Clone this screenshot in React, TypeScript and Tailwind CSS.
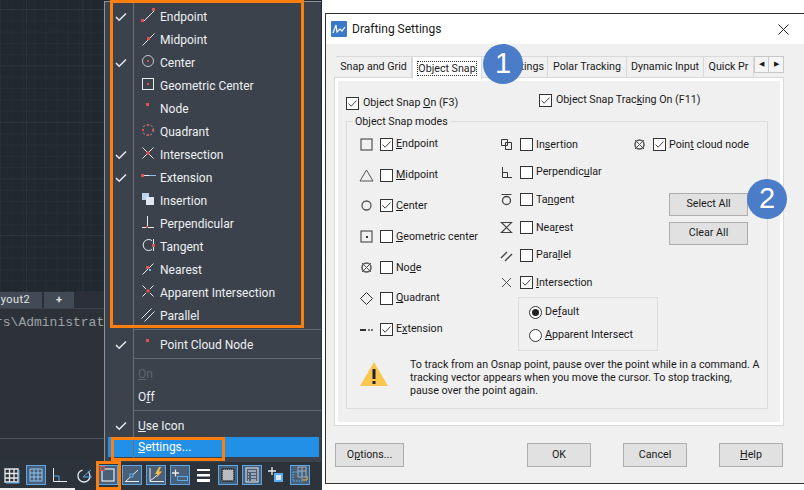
import React from "react";

const RED = "#e0524f";
const W = "#e8eaec";

type MenuItem = { label: string; checked?: boolean; icon: React.ReactNode };

const Line = ({ d, c = W, w = 1 }: { d: string; c?: string; w?: number }) => (
  <path d={d} fill="none" stroke={c} strokeWidth={w} />
);
const Dot = ({ x, y, s = 3, c = RED }: { x: number; y: number; s?: number; c?: string }) => (
  <rect x={x} y={y} width={s} height={s} fill={c} />
);

const menuItems: MenuItem[] = [
  { label: "Endpoint", checked: true, icon: <><Line d="M2.5 13.5 13.5 2.5" /><Dot x={0} y={11} /><Dot x={11} y={0} /></> },
  { label: "Midpoint", icon: <><Line d="M1.5 14.5 13.5 2.5" /><Dot x={6} y={6} /></> },
  { label: "Center", checked: true, icon: <><circle cx="7" cy="7" r="5.5" fill="none" stroke="#c4c7cb" /><Dot x={6} y={6} s={2} /></> },
  { label: "Geometric Center", icon: <><rect x="1.5" y="1.5" width="11" height="11" fill="none" stroke={W} /><Dot x={6} y={6} s={2} /></> },
  { label: "Node", icon: <Dot x={5} y={3} /> },
  { label: "Quadrant", icon: <><circle cx="7" cy="7" r="5.5" fill="none" stroke="#a9adb2" strokeDasharray="2 2" /><Dot x={6} y={1} s={2} /><Dot x={1} y={6} s={2} /><Dot x={11} y={6} s={2} /><Dot x={6} y={11} s={2} /></> },
  { label: "Intersection", checked: true, icon: <><Line d="M1.5 1.5 12.5 12.5M12.5 1.5 1.5 12.5" /><Dot x={5.5} y={5.5} s={3} /></> },
  { label: "Extension", checked: true, icon: <><Dot x={0} y={5} /><Line d="M3 6.5H8" /><Line d="M8 6.5H15" c="#8fc3ea" /></> },
  { label: "Insertion", icon: <><rect x="1" y="1" width="7" height="7" fill="#bcd3ea" /><rect x="5" y="5" width="8" height="8" fill="#dfe8f2" /></> },
  { label: "Perpendicular", icon: <><Line d="M6.5 1V12M1 12.5H13" /><Dot x={5} y={11} s={2} /></> },
  { label: "Tangent", icon: <><path d="M11 2.6A5.5 5.5 0 1 0 11 11.4" fill="none" stroke={W} /><Line d="M12.5 1V13" /><Dot x={11} y={6} /></> },
  { label: "Nearest", icon: <><Line d="M1.5 13.5 12.5 2.5" /><Dot x={5} y={5} /><Dot x={8} y={8} s={2} c="#6fb5ea" /></> },
  { label: "Apparent Intersection", icon: <><Line d="M1.5 1.5 5 5M9 9 12.5 12.5M12.5 1.5 9 5M5 9 1.5 12.5" /><Dot x={5.5} y={5.5} s={3} /></> },
  { label: "Parallel", icon: <><Line d="M0.5 11.5 10.5 1.5M3.5 14.5 13.5 4.5" /></> },
];

const Check = () => (
  <svg width="12" height="10" viewBox="0 0 12 10">
    <path d="M1 5 4.2 8.2 11 1.5" fill="none" stroke="#e8eaec" strokeWidth="1.5" />
  </svg>
);

const MenuRow = ({ item }: { item: MenuItem }) => (
  <div className="flex h-[23px] items-center">
    <div className="flex w-[29px] justify-center pl-[2px]">{item.checked && <Check />}</div>
    <div className="flex w-[26px] pl-[7px]">
      <svg width="16" height="15" viewBox="0 0 16 15" className="-mt-[3px]">{item.icon}</svg>
    </div>
    <span className="text-[#eef0f2]">{item.label}</span>
  </div>
);

const StatusBtn = ({ active, children }: { active?: boolean; children: React.ReactNode }) => (
  <div className={`flex h-[20px] w-[20px] items-center justify-center border ${active ? "border-[#5da6e6] bg-[#4a6078]" : "border-transparent"}`}>
    <svg width="18" height="18" viewBox="0 0 18 18">{children}</svg>
  </div>
);

const BLUE = "#5aaef0";

const StatusBar = () => (
  <div className="flex h-[29px] items-start gap-[4px] bg-[#2d333b] pl-[2px] pt-[4px]">
    <StatusBtn>
      <Line d="M2 3H15V16H2ZM6.5 3V16M11 3V16M2 7.5H15M2 12H15" w={1.3} />
      <Line d="M16 4V17H3" c={BLUE} />
    </StatusBtn>
    <StatusBtn active><Line d="M3 3H15V15H3ZM7 3V15M11 3V15M3 7H15M3 11H15" c="#8ec6f2" /></StatusBtn>
    <StatusBtn>
      <Line d="M2.500 2V15.500H16" />
      <Line d="M2.500 10H8V15" c={BLUE} />
    </StatusBtn>
    <StatusBtn>
      <circle cx="9" cy="10" r="6" fill="none" stroke={W} strokeWidth="1.3" strokeDasharray="26 6" />
      <Line d="M8 11 16 4M8 11H17" c={BLUE} />
    </StatusBtn>
    <StatusBtn active>
      <rect x="3" y="3" width="12" height="12" fill="none" stroke={W} strokeWidth="1.2" />
      <rect x="1.500" y="0.500" width="4" height="4" fill="#5a6a7c" stroke={RED} />
    </StatusBtn>
    <StatusBtn active><Line d="M2 16 15 4M2 15.500H16" /><rect x="7" y="8" width="3" height="3" fill="#4a6078" stroke={BLUE} /></StatusBtn>
    <StatusBtn active>
      <Line d="M3 2V15.500H17M3 15 14 6" />
      <path d="M12 1 8 8H11L9.500 12 15 5.500H12L14 1Z" fill="#f5b93d" />
    </StatusBtn>
    <StatusBtn active>
      <Line d="M1 7H8M4.500 3.500V10.500" w={1.3} />
      <rect x="6.500" y="10.500" width="10" height="4" fill="none" stroke={BLUE} />
    </StatusBtn>
    <StatusBtn>
      <rect x="2" y="3" width="13" height="2" fill="#fff" />
      <rect x="2" y="8" width="13" height="2.500" fill="#fff" />
      <rect x="2" y="13" width="13" height="3" fill="#fff" />
    </StatusBtn>
    <StatusBtn active>
      <rect x="3" y="3" width="12" height="12" rx="1" fill="#b9bcc0" stroke="#1e2329" strokeWidth="1.5" strokeDasharray="1.500 0.500" />
    </StatusBtn>
    <StatusBtn active>
      <rect x="3" y="2" width="12" height="14" fill="none" stroke={W} />
      <Line d="M5 5H13M5 8H6M8 8H13M5 11H6M8 11H13M5 14H6M8 14H13" />
    </StatusBtn>
    <StatusBtn>
      <Line d="M1 5H9M5 1V9" w={1.3} />
      <rect x="8" y="8" width="7" height="7" fill="#dfe8f2" stroke={BLUE} strokeWidth="2" />
    </StatusBtn>
    <StatusBtn active>
      <Line d="M7 1H15V11H7ZM11 1V11M7 5H15" c="#a5adb6" />
      <rect x="2" y="6" width="9" height="9" fill="none" stroke={BLUE} strokeDasharray="1.500 1" />
      <Line d="M16 10V14H11" c="#f5b93d" />
    </StatusBtn>
  </div>
);

const CadPanel = () => (
  <div className="flex h-full w-[325px] shrink-0 flex-col bg-white font-['Roboto',sans-serif]">
    <div className="h-[292px] w-[322px] bg-[#212830]">
      <svg width="322" height="292">
        <defs>
          <pattern id="minor" width="11.3" height="11.3" patternUnits="userSpaceOnUse" y="9">
            <path d="M11.3 0H0V11.3" fill="none" stroke="#29313a" />
          </pattern>
          <pattern id="major" width="56.5" height="56.5" patternUnits="userSpaceOnUse" x="26" y="9">
            <path d="M56.500 0H0V56.500" fill="none" stroke="#323b46" />
          </pattern>
        </defs>
        <rect width="322" height="292" fill="url(#minor)" />
        <rect width="322" height="292" fill="url(#major)" />
      </svg>
    </div>
    <div className="flex h-[16px] w-[322px] gap-[2px] bg-[#2b3038] text-[11px] leading-[15px] text-[#e0e2e4]">
      <div className="w-[42px] bg-[#424a55] pr-[12px] text-right tracking-[0.4px]">yout2</div>
      <div className="w-[30px] bg-[#424a55] text-center font-bold">+</div>
    </div>
    <div className="h-[130px] w-[322px] overflow-hidden border-t border-[#3a414a] bg-[#2d3239] pt-[5px] font-['Liberation_Mono',monospace] text-[13px] leading-[18px] text-[#9ea3a8]">
      <div className="-ml-[5px] whitespace-nowrap">rs\Administrat</div>
    </div>
    <div className="h-[23px] w-[322px] border-t border-[#4a525c] bg-[#2d3239]" />
    <div className="relative w-[322px]">
      <StatusBar />
      <div className="absolute bottom-0 left-0 h-[2px] w-[75px] bg-[#f0f0f0]" />
    </div>
  </div>
);

const SnapMenu = () => (
  <div className="absolute left-[104px] top-[1px] h-[461px] w-[217px] border-l border-t border-[#8f949a] bg-[#3b424c] font-['Roboto',sans-serif] text-[12px]">
    <div className="absolute bottom-[4px] left-[28px] top-0 w-px bg-[#6a7079]" />
    <div className="pt-[3px]">
      {menuItems.map((item) => (
        <MenuRow key={item.label} item={item} />
      ))}
    </div>
    <div className="ml-[29px] mt-[2px] h-px bg-[#5f666f]" />
    <div className="mt-[3px]">
      <MenuRow item={{ label: "Point Cloud Node", checked: true, icon: <Dot x={5} y={3} c="#d9534f" /> }} />
    </div>
    <div className="ml-[29px] mt-[2px] h-px bg-[#5f666f]" />
    <div className="mt-[3px] flex h-[23px] items-center pl-[33px] text-[#5d646d]"><span><u>O</u>n</span></div>
    <div className="flex h-[23px] items-center pl-[33px] text-[#eef0f2]"><span>O<u>f</u>f</span></div>
    <div className="ml-[29px] mt-[2px] h-px bg-[#5f666f]" />
    <div className="mt-[3px] flex h-[23px] items-center text-[#eef0f2]">
      <div className="flex w-[29px] justify-center pl-[2px]"><Check /></div>
      <span className="pl-[4px]"><u>U</u>se Icon</span>
    </div>
    <div className="ml-[3px] mr-[2px] flex h-[20px] items-center bg-[#2390e8] pl-[30px] text-white">
      <span><u>S</u>ettings...</span>
    </div>
  </div>
);

const Box = ({ on }: { on?: boolean }) => (
  <div className="flex h-[13px] w-[13px] shrink-0 items-center justify-center border border-[#333] bg-white">
    {on && (
      <svg width="11" height="11" viewBox="0 0 11 11">
        <path d="M1.500 5.500 4.200 8.200 9.500 2.500" fill="none" stroke="#444" />
      </svg>
    )}
  </div>
);

const G = "#333";
const modeIcons: Record<string, React.ReactNode> = {
  end: <rect x="2" y="2" width="11" height="11" fill="none" stroke={G} />,
  mid: <path d="M7.500 2 14 13H1Z" fill="none" stroke="#555" />,
  center: <circle cx="7.500" cy="7.500" r="4.500" fill="none" stroke="#555" strokeWidth="1.300" />,
  geo: <><rect x="2" y="2" width="11" height="11" fill="none" stroke={G} /><rect x="7" y="7" width="2" height="2" fill={G} /></>,
  node: <><circle cx="7.500" cy="7.500" r="4.500" fill="none" stroke="#555" strokeWidth="1.500" /><path d="M3 3 12 12M12 3 3 12" stroke="#555" /></>,
  quad: <path d="M7.500 1.500 13.500 7.500 7.500 13.500 1.500 7.500Z" fill="none" stroke={G} />,
  ext: <><rect x="1" y="7" width="6" height="2" fill={G} /><rect x="9" y="7" width="2" height="2" fill="#777" /><rect x="12" y="7" width="2" height="2" fill="#777" /></>,
  ins: <path d="M2.500 2.500H8.500V5.500H12.500V12.500H6.500V8.500H2.500ZM6.500 5.500H8.500V8.500H6.500Z" fill="none" stroke={G} />,
  perp: <path d="M3.500 2V12.500H13M3.500 7.500H8.500V12.500" fill="none" stroke={G} />,
  tan: <><circle cx="7.500" cy="8.500" r="4" fill="none" stroke="#444" strokeWidth="1.300" /><path d="M2.500 2.500H12.500" stroke="#444" /></>,
  near: <path d="M2.500 2.500H12.500L2.500 12.500H12.500Z" fill="none" stroke="#444" strokeWidth="1.200" />,
  par: <path d="M2 10 8 4M6 13 13 6" fill="none" stroke="#444" strokeWidth="1.400" />,
  int: <path d="M3 3 12 12M12 3 3 12" fill="none" stroke="#555" />,
};

type Mode = { icon: string; label: React.ReactNode; on?: boolean };

const col1: Mode[] = [
  { icon: "end", label: <><u>E</u>ndpoint</>, on: true },
  { icon: "mid", label: <><u>M</u>idpoint</> },
  { icon: "center", label: <><u>C</u>enter</>, on: true },
  { icon: "geo", label: <><u>G</u>eometric center</> },
  { icon: "node", label: <>No<u>d</u>e</> },
  { icon: "quad", label: <><u>Q</u>uadrant</> },
  { icon: "ext", label: <>E<u>x</u>tension</>, on: true },
];

const col2: Mode[] = [
  { icon: "ins", label: <>In<u>s</u>ertion</> },
  { icon: "perp", label: <>Perpendic<u>u</u>lar</> },
  { icon: "tan", label: <>Ta<u>n</u>gent</> },
  { icon: "near", label: <>Nea<u>r</u>est</> },
  { icon: "par", label: <>Para<u>l</u>lel</> },
  { icon: "int", label: <><u>I</u>ntersection</>, on: true },
];

const ModeRow = ({ mode, h }: { mode: Mode; h: string }) => (
  <div className={`flex items-center ${h}`}>
    <svg width="15" height="15" viewBox="0 0 15 15" className="mr-[6px] shrink-0">{modeIcons[mode.icon]}</svg>
    <Box on={mode.on} />
    <span className="ml-[3px] whitespace-nowrap">{mode.label}</span>
  </div>
);

const Radio = ({ on, children }: { on?: boolean; children: React.ReactNode }) => (
  <div className="flex h-[23px] items-center">
    <div className="flex h-[13px] w-[13px] items-center justify-center rounded-full border border-[#333] bg-white">
      {on && <div className="h-[7px] w-[7px] rounded-full bg-[#222]" />}
    </div>
    <span className="ml-[3px] whitespace-nowrap">{children}</span>
  </div>
);

const Btn = ({ className, children }: { className: string; children: React.ReactNode }) => (
  <div className={`flex items-center justify-center border border-[#adadad] bg-[#e1e1e1] ${className}`}>{children}</div>
);

const tabs = [
  { label: "Snap and Grid", w: "w-[76px]" },
  { label: "Object Snap", w: "w-[70px]", active: true },
  { label: "Settings", w: "w-[66px]", right: true },
  { label: "Polar Tracking", w: "w-[79px]" },
  { label: "Dynamic Input", w: "w-[77px]" },
  { label: "Quick Pr", w: "w-[50px]" },
];

const DraftingDialog = () => (
  <div className="relative flex h-[471px] w-[479px] shrink-0 flex-col border-y border-l border-[#333] bg-[#f0f0f0] font-['Roboto',sans-serif] text-[10.7px] text-[#1a1a1a]">
    <div className="flex h-[30px] items-center bg-white pl-[5px]">
      <svg width="16" height="16" viewBox="0 0 16 16" className="shrink-0">
        <rect width="16" height="16" rx="1" fill="#3a78c8" />
        <path d="M2 12 5 4 6 11 9 8 11 10 14 6" fill="none" stroke="#fff" strokeWidth="1.200" />
      </svg>
      <span className="ml-[5px] text-[12px]">Drafting Settings</span>
      <svg width="11" height="11" viewBox="0 0 11 11" className="ml-auto mr-[15px]">
        <path d="M0.500 0.500 10.500 10.500M10.500 0.500 0.500 10.500" stroke="#222" />
      </svg>
    </div>

    <div className="mt-[11px] flex h-[22px] items-end pl-[10px]">
      {tabs.map((t) => (
        <div
          key={t.label}
          className={
            t.active
              ? `${t.w} relative z-10 -mb-[2px] flex h-[23px] items-center justify-center border border-b-0 border-[#d9d9d9] bg-white`
              : `${t.w} flex h-[21px] items-center border border-l-0 border-b-0 border-[#d9d9d9] ${t.right ? "justify-end pr-[3px]" : "justify-center"} whitespace-nowrap overflow-hidden`
          }
        >
          {t.active ? <span className="border border-dotted border-[#333] leading-[13px]">{t.label}</span> : t.label}
        </div>
      ))}
      <div className="mb-[4px] flex h-[17px] w-[30px] border border-[#c8c8c8] bg-[#f5f5f5]">
        <div className="flex w-1/2 items-center justify-center border-r border-[#c8c8c8] text-[7px]">◀</div>
        <div className="flex w-1/2 items-center justify-center text-[7px]">▶</div>
      </div>
    </div>

    <div className="ml-[8px] h-[349px] w-[450px] border border-[#d9d9d9]">
      <div className="h-full w-full border-[3px] border-white bg-[#f0f0f0] px-[8px]">
        <div className="flex h-[40px] pt-[12px]">
          <div className="flex h-[20px] w-[193px] items-center">
            <Box on />
            <span className="ml-[4px]">Object Snap <u>O</u>n (F3)</span>
          </div>
          <div className="-mt-[3px] flex h-[20px] items-center">
            <Box on />
            <span className="ml-[4px]">Object Snap Trac<u>k</u>ing On (F11)</span>
          </div>
        </div>

        <div className="relative h-[288px] w-[422px] border border-[#dcdcdc]">
          <span className="absolute -top-[8px] left-[6px] bg-[#f0f0f0] px-[2px]">Object Snap modes</span>
          <div className="flex h-[235px] pl-[12px]">
            <div className="w-[140px] pt-[7px]">
              {col1.map((m) => (
                <ModeRow key={m.icon} mode={m} h="h-[30.8px]" />
              ))}
            </div>
            <div className="w-[133px] pt-[9px]">
              {col2.map((m) => (
                <ModeRow key={m.icon} mode={m} h="h-[27.6px]" />
              ))}
              <div className="ml-[19px] h-[54px] w-[140px] border border-[#dcdcdc] pl-[10px] pt-[3px]">
                <Radio on>De<u>f</u>ault</Radio>
                <Radio><u>A</u>pparent Intersect</Radio>
              </div>
            </div>
            <div className="pt-[9px]">
              <ModeRow mode={{ icon: "node", label: <>Poin<u>t</u> cloud node</>, on: true }} h="h-[27.6px]" />
              <Btn className="ml-[37px] mt-[34px] h-[23px] w-[79px]">Select All</Btn>
              <Btn className="ml-[37px] mt-[6px] h-[23px] w-[79px]">Clear All</Btn>
            </div>
          </div>
          <div className="flex pl-[13px] pt-[1px]">
            <svg width="28" height="25" viewBox="0 0 28 25" className="mr-[22px] mt-[3px] shrink-0">
              <path d="M14 1 28 25H0Z" fill="#f9c74f" />
              <rect x="12.500" y="8" width="3" height="10" fill="#222" />
              <rect x="12.500" y="20" width="3" height="3" fill="#222" />
            </svg>
            <p className="whitespace-nowrap leading-[13px]">
              To track from an Osnap point, pause over the point while in a command. A
              <br />
              tracking vector appears when you move the cursor. To stop tracking,
              <br />
              pause over the point again.
            </p>
          </div>
        </div>
      </div>
    </div>

    <div className="mt-[17px] flex pl-[9px]">
      <Btn className="h-[24px] w-[69px]">O<u>p</u>tions...</Btn>
      <Btn className="ml-[123px] h-[24px] w-[64px]">OK</Btn>
      <Btn className="ml-[32px] h-[24px] w-[64px]">Cancel</Btn>
      <Btn className="ml-[32px] h-[24px] w-[64px]"><span><u>H</u>elp</span></Btn>
    </div>
  </div>
);

const Badge = ({ n, className }: { n: number; className: string }) => (
  <div className={`absolute z-20 flex h-[40px] w-[40px] items-center justify-center rounded-full bg-[#4a7cc7] font-['Liberation_Sans',sans-serif] text-[29px] text-white ${className}`}>
    {n}
  </div>
);

export default function App() {
  return (
    <div className="relative flex h-[490px] w-[804px] items-start overflow-hidden bg-white">
      <CadPanel />
      <div className="pt-[13px]">
        <DraftingDialog />
      </div>
      <SnapMenu />
      {/* callouts */}
      <div className="absolute left-[110px] top-0 h-[328px] w-[194px] border-[3px] border-[#ff7f0e]" />
      <div className="absolute left-[111px] top-[437px] h-[24px] w-[114px] border-[3px] border-[#ff7f0e]" />
      <div className="absolute left-[96px] top-[461px] h-[29px] w-[25px] border-[3px] border-[#ff7f0e]" />
      <Badge n={1} className="left-[483px] top-[44px]" />
      <Badge n={2} className="left-[747px] top-[179px]" />
    </div>
  );
}
